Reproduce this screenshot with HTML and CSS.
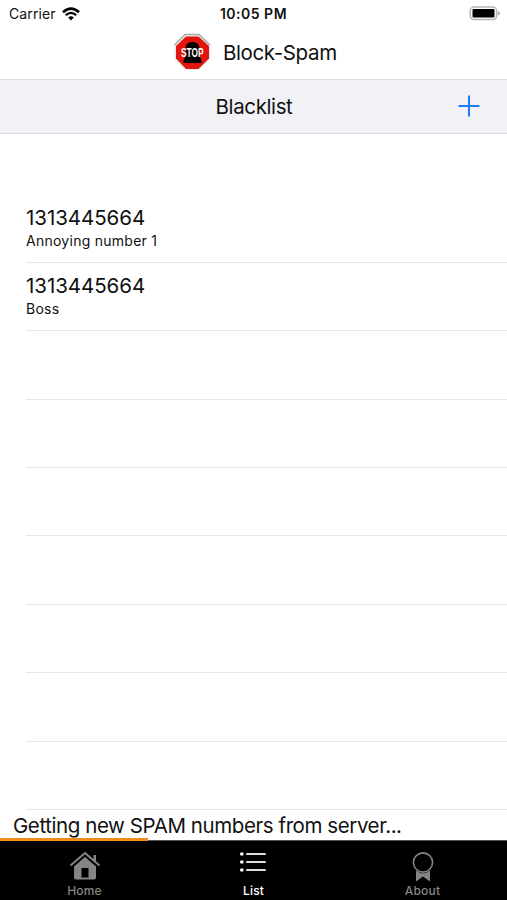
FILE: index.html
```html
<!DOCTYPE html>
<html>
<head>
	<meta charset="utf-8">
	<title>Block-Spam</title>
	<link rel="stylesheet" href="styles.css">
</head>
<body>
	<div class="app">
		<div class="statusbar">
			<div class="side">
				<span class="carrier">Carrier</span>
				<svg class="wifi" width="18" height="14" viewBox="0 0 18 14">
					<path d="M1 5.2Q9 -2 17 5.2" fill="none" stroke="#000" stroke-width="2.6"/>
					<path d="M3.8 8.2Q9 3.6 14.2 8.2" fill="none" stroke="#000" stroke-width="2.3"/>
					<path d="M6.2 10.4Q9 8 11.8 10.4L9 13.4Z"/>
				</svg>
			</div>
			<div class="time">10:05 PM</div>
			<div class="side right">
				<svg width="32" height="15" viewBox="0 0 32 15">
					<rect x="1.2" y="1" width="26.5" height="12.6" rx="4" fill="#fff" stroke="#b5b5b5" stroke-width="1.5"/>
					<rect x="3.5" y="3" width="22" height="8.6" rx="1"/>
					<path d="M29 5Q33 7.3 29 9.6Z" fill="#aaa"/>
				</svg>
			</div>
		</div>

		<div class="titlebar">
			<svg class="logo" width="38" height="38" viewBox="0 0 38 38">
				<path d="M12 1H26L37 12V26L26 37H12L1 26V12Z" fill="#eee"/>
				<path d="M1.5 12L12 1.5H26L37 12" fill="none" stroke="#aaa" stroke-width="1.4"/>
				<path d="M13 3.5H25.5L36 13V25.5L25.5 36H13L3 25.5V13Z" fill="#e2160c"/>
				<path d="M12.5 15C13 11 15.500 9 19.500 9S26 11 26.500 15V23L28.500 27V30H10.500V27L13 23Z"/>
				<text transform="translate(8 23.5) scale(.64 1)">STOP</text>
			</svg>
			<span class="title">Block-Spam</span>
		</div>

		<div class="navbar">
			<span class="heading">Blacklist</span>
			<svg class="add" width="22" height="22" viewBox="0 0 22 22">
				<path d="M11 .5V21.5M.5 11H21.5" stroke="#1a7df5" stroke-width="2"/>
			</svg>
		</div>

		<div class="list">
			<div class="row">
				<div class="number">1313445664</div>
				<div class="label">Annoying number 1</div>
			</div>
			<div class="row">
				<div class="number">1313445664</div>
				<div class="label">Boss</div>
			</div>
			<div class="row"></div>
			<div class="row"></div>
			<div class="row"></div>
			<div class="row"></div>
			<div class="row"></div>
			<div class="row"></div>
			<div class="row"></div>
		</div>

		<div class="message">Getting new SPAM numbers from server...</div>
		<div class="progress"><div class="bar" style="width: 29.1%"></div></div>

		<div class="tabs">
			<div class="tab">
				<svg width="32" height="30" viewBox="0 0 32 30">
					<path d="M5 16L16 6.500L27 16V27.500Q27 29.500 25 29.500H7Q5 29.500 5 27.500Z" fill="#858585"/>
					<path d="M1.5 16.500L16 3.700L30.5 16.500" fill="none" stroke="#000" stroke-width="4.5"/>
					<path d="M1.5 15.500L16 3L30.5 15.500" fill="none" stroke="#858585" stroke-width="2"/>
					<path d="M24.5 5H27V12.500L24.5 10.500Z" fill="#858585"/>
					<rect x="12.500" y="18" width="7" height="9.500" fill="#000"/>
				</svg>
				<span>Home</span>
			</div>
			<div class="tab active">
				<svg width="32" height="30" viewBox="0 0 32 30">
					<path d="M9 4H27M9 12H27M9 20H27" stroke="#ddd" stroke-width="2" stroke-linecap="round"/>
					<circle cx="3.8" cy="4" r="1.8" fill="#fff"/>
					<circle cx="3.8" cy="12" r="1.8" fill="#fff"/>
					<circle cx="3.8" cy="20" r="1.8" fill="#fff"/>
				</svg>
				<span>List</span>
			</div>
			<div class="tab">
				<svg width="32" height="32" viewBox="0 0 32 32">
					<circle cx="16" cy="12.5" r="9.600" fill="none" stroke="#858585" stroke-width="1.600"/>
					<path d="M9 20.500Q16 26 23 20.500V31.500L16 26.500L9 31.500Z" fill="#858585"/>
				</svg>
				<span>About</span>
			</div>
		</div>
	</div>
</body>
</html>
```
FILE: styles.css
```css
* {
	box-sizing: border-box;
}
body {
	margin: 0;
	background: #fff;
	color: #111;
	font-family: Inter, "Liberation Sans", sans-serif;
}
svg {
	display: block;
	flex: none;
}
.app {
	display: flex;
	flex-direction: column;
	height: 900px;
	overflow: hidden;
}
.statusbar {
	display: flex;
	align-items: center;
	height: 27px;
	padding: 0 6px 0 9px;
}
.side {
	display: flex;
	align-items: center;
	flex: 1;
	gap: 6px;
}
.side.right {
	justify-content: flex-end;
}
.carrier {
	font-size: 14px;
	letter-spacing: .1px;
}
.time {
	font-size: 14px;
	font-weight: 600;
	letter-spacing: .5px;
	margin-right: 3px;
}
.titlebar {
	display: flex;
	align-items: center;
	height: 52px;
	padding: 0 0 3px 173px;
	gap: 12px;
}
.logo text {
	fill: #fff;
	font-family: "Liberation Sans", sans-serif;
	font-size: 13px;
	font-weight: bold;
}
.title, .heading {
	font-size: 20.5px;
	letter-spacing: -.38px;
}
.title {
	padding-top: 2px;
}
.navbar {
	display: grid;
	grid-template-columns: 1fr auto 1fr;
	align-items: center;
	height: 55px;
	padding: 0 27px 1px 28px;
	background: #f2f1f6;
	border-top: 1px solid #dcdce0;
	border-bottom: 1px solid #dcdce0;
}
.heading {
	grid-column: 2;
}
.add {
	justify-self: end;
}
.list {
	flex: 1;
	padding: 60.4px 0 0 26px;
}
.row {
	height: 68.4px;
	padding-top: 11.6px;
	border-bottom: 1px solid #e6e6e8;
}
.number {
	font-size: 20.5px;
	line-height: 24px;
	letter-spacing: -.05px;
}
.label {
	font-size: 14px;
	line-height: 22px;
	letter-spacing: .26px;
}
.message {
	height: 28px;
	padding-left: 13px;
	font-size: 20.5px;
	letter-spacing: -.42px;
	line-height: 32px;
}
.progress {
	height: 3px;
	border-bottom: 1px solid #555;
}
.bar {
	height: 3px;
	background: #f38a1c;
}
.tabs {
	display: flex;
	height: 59px;
	background: #000;
}
.tab {
	display: flex;
	flex: 1;
	flex-direction: column;
	align-items: center;
	justify-content: space-between;
	padding-top: 9px;
	color: #858585;
	font-size: 12px;
	font-weight: 500;
	letter-spacing: .2px;
	line-height: 18px;
}
.tab.active {
	color: #fff;
}
```
